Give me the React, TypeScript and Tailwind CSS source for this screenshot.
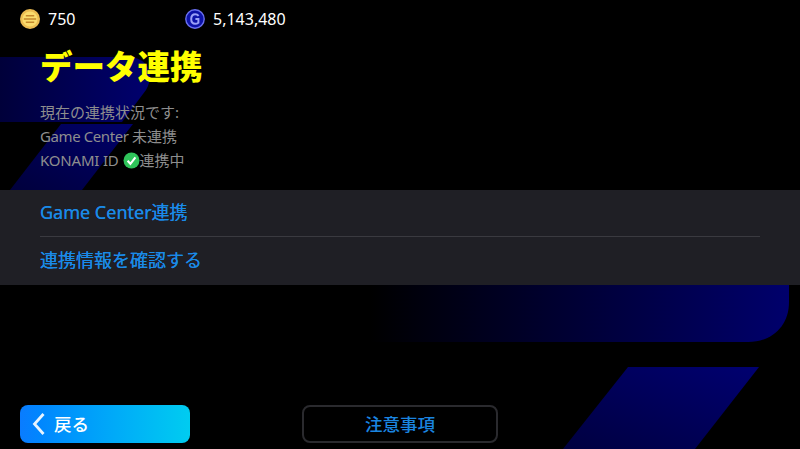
import React from "react";

const cjk = "font-['Noto_Sans','Noto_Sans_CJK_JP',sans-serif]";

function Background() {
  return (
    <svg className="absolute inset-0" width="800" height="449" viewBox="0 0 800 449" fill="none">
      <defs>
        <linearGradient id="barA" x1="0" y1="0" x2="1" y2="0">
          <stop offset="0" stopColor="#000000" />
          <stop offset="1" stopColor="#00006c" />
        </linearGradient>
        <linearGradient id="barB" x1="0" y1="0" x2="1" y2="0">
          <stop offset="0" stopColor="#00003a" />
          <stop offset="1" stopColor="#00006e" />
        </linearGradient>
        <linearGradient id="slantA" x1="0" y1="1" x2="1" y2="0">
          <stop offset="0" stopColor="#000040" />
          <stop offset="1" stopColor="#000070" />
        </linearGradient>
        <linearGradient id="slantB" x1="0" y1="1" x2="1" y2="0">
          <stop offset="0" stopColor="#00003c" />
          <stop offset="1" stopColor="#00006a" />
        </linearGradient>
      </defs>
      <path d="M0 57H128C146 57 156 72 146 90L122 122H0Z" fill="url(#barB)" />
      <path d="M61 124H133L82 190H10Z" fill="url(#slantB)" />
      <path d="M370 270H789V302C789 326 772 342 748 342H370Z" fill="url(#barA)" />
      <path d="M628 367H759L695 449H563Z" fill="url(#slantA)" />
    </svg>
  );
}

function Coin() {
  return (
    <svg width="20" height="20" viewBox="0 0 20 20">
      <circle cx="10" cy="10" r="10" fill="#ecbc52" />
      <circle cx="10" cy="10" r="7.6" fill="#fbdc6c" />
      <path d="M5.8 6.8H14.2M3.8 10H16.2M5.8 13.2H14.2" stroke="#c4872c" strokeWidth="1.5" />
    </svg>
  );
}

function GCoin() {
  return (
    <svg width="20" height="20" viewBox="0 0 20 20">
      <circle cx="10" cy="10" r="9.2" fill="#0c12a8" stroke="#6a70f0" strokeWidth="1.4" />
      <path d="M13.6 6.8C12.8 5.8 11.6 5.2 10.3 5.2C7.8 5.2 6.2 7.2 6.2 10C6.2 12.8 7.8 14.8 10.2 14.8C11.3 14.8 12.3 14.5 13.4 13.7V10H10.4" stroke="#9aa0f8" strokeWidth="2" fill="none" />
    </svg>
  );
}

function Check() {
  return (
    <svg width="17" height="17" viewBox="0 0 17 17">
      <circle cx="8.5" cy="8.5" r="8" fill="#2fc45a" />
      <path d="M4.6 8.8L7.4 11.8L12.4 5.4" stroke="#ffffff" strokeWidth="2.1" fill="none" />
    </svg>
  );
}

export default function App() {
  return (
    <div className={`relative w-[800px] h-[449px] overflow-hidden bg-black ${cjk}`}>
      <Background />
      <div className="relative flex h-full flex-col">
        <div className="flex h-[38px] items-center pl-[20px] text-[16px] text-white">
          <div className="flex w-[165px] items-center gap-[8px]">
            <Coin />
            <span>750</span>
          </div>
          <div className="flex items-center gap-[8px]">
            <GCoin />
            <span>5,143,480</span>
          </div>
        </div>
        <h1 className="mt-[8px] h-[42px] pl-[40px] text-[32.5px] leading-[42px] font-black text-[#ffff00]">データ連携</h1>
        <div className="mt-[12px] h-[73px] pl-[40px] text-[15px] leading-[24px] text-[#8e8e8e]">
          <p>現在の連携状況です:</p>
          <p><span className="tracking-[-0.4px]">Game Center </span>未連携</p>
          <p className="flex items-center">
            <span className="tracking-[-0.2px]">KONAMI ID</span>
            <span className="ml-[4px] flex"><Check /></span>連携中
          </p>
        </div>
        <div className="mt-[17px] h-[95px] bg-[#1f1f25] px-[40px] text-[18px] text-[#1a8ae8]">
          <div className="flex h-[47px] items-center border-b border-[#3a3a40] pb-[1px] [text-shadow:0_0_0.4px_#1a8ae8]">Game Center連携</div>
          <div className="flex h-[48px] items-center pb-[2px] [text-shadow:0_0_0.4px_#1a8ae8]">連携情報を確認する</div>
        </div>
        <div className="mt-[120px] flex items-center pl-[20px]">
          <button className="flex h-[38px] w-[170px] items-center rounded-[8px] bg-gradient-to-r from-[#0a7cff] to-[#00ccf0] pl-[12px] text-[17.5px] font-medium text-white">
            <svg width="14" height="24" viewBox="0 0 14 24" fill="none">
              <path d="M11.5 2L2.5 12L11.5 22" stroke="#e8f4ff" strokeWidth="2.8" />
            </svg>
            <span className="ml-[8px]">戻る</span>
          </button>
          <button className="ml-[112px] h-[38px] w-[196px] rounded-[8px] border-2 border-[#2a2a2e] text-[17.5px] font-medium text-[#1a85e0]">
            注意事項
          </button>
        </div>
      </div>
    </div>
  );
}
